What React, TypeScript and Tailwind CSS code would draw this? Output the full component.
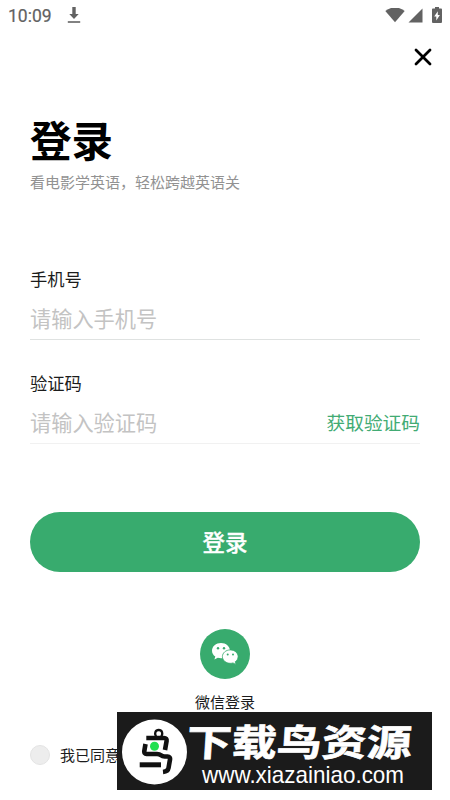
import { X } from "lucide-react";

function StatusBar() {
  return (
    <div className="flex h-8 items-center justify-between pl-2 pr-2 text-[#626262]">
      <div className="flex items-center gap-[15px]">
        <span className="font-[Roboto] text-[17.500px] font-normal leading-8 [-webkit-text-stroke:0.2px_#626262]">10:09</span>
        <svg className="h-[18px] w-3.5" viewBox="0 0 14 18" fill="currentColor">
          <path d="M5.300 0h3.400v7h3L7 12 2.300 7h3z" />
          <path d="M.8 14.200h12.400v1.600H.8z" />
        </svg>
      </div>
      <div className="flex items-center">
        <svg className="h-4 w-5" viewBox="0 0 20 16" fill="currentColor">
          <path d="M0.3 3C6-1.700 14-1.700 19.700 3L10 14.200z" />
        </svg>
        <svg className="ml-[3px] h-4 w-[15px]" viewBox="0 0 15 16" fill="currentColor">
          <path d="M14.5 .5v14H.5z" />
        </svg>
        <svg className="ml-[9px] h-[18px] w-[10px]" viewBox="0 0 10 18" fill="currentColor">
          <path d="M3 0h4v1.600h2.200q.8 0 .8.8V15q0 1-1 1H1q-1 0-1-1V2.400q0-.8.8-.8H3z" />
          <path fill="#fff" d="M5.800 4.200 2.200 9.600h2.100v4l3.600-5.500H5.800z" />
        </svg>
      </div>
    </div>
  );
}

function WechatIcon() {
  return (
    <svg className="h-6 w-7" viewBox="0 0 28 24">
      <path
        fill="#fff"
        d="M10 1C5 1 1 4.400 1 8.700c0 2.400 1.300 4.500 3.300 5.900l-.9 3 3.400-1.800c1 .3 2.100.5 3.200.5 5 0 9-3.400 9-7.600S15 1 10 1z"
      />
      <path
        fill="#fff"
        stroke="#38ab6e"
        strokeWidth=".8"
        d="M19.300 7.900c-4.400 0-7.900 3-7.900 6.700s3.500 6.700 7.900 6.700c1 0 1.900-.1 2.700-.4l3 1.600-.8-2.700c1.800-1.200 2.900-3.100 2.900-5.200 0-3.700-3.400-6.700-7.800-6.700z"
      />
      <g fill="#38ab6e">
        <circle cx="7" cy="6.200" r="1.200" />
        <circle cx="13" cy="6.200" r="1.200" />
        <circle cx="16.700" cy="12.500" r="1" />
        <circle cx="22" cy="12.500" r="1" />
      </g>
    </svg>
  );
}

function BirdLogo() {
  return (
    <svg className="mt-0.5 h-[66px] w-[66px] shrink-0" viewBox="0 0 66 66">
      <circle cx="33.500" cy="33" r="32.500" fill="#fff" />
      <g fill="none" stroke="#111" strokeWidth="4.600">
        <path strokeWidth="2.400" d="M35 17.500c-2-3-.5-6.500 2.700-6.500s4.700 3.500 2.700 6.500" />
        <path d="M25.300 19h17.700q3 0 2.600 3L44 31" />
        <path d="M24.500 25 23.300 32q-.3 3 2.200 3h10.500q2.500 0 4 1.300t4 1.200h2.500q3 .2 2.500 3L47.500 49q-.5 3.500-5.500 4" />
        <path strokeWidth="5" d="M18.700 45.800h21.300" />
      </g>
      <circle cx="33.500" cy="27.300" r="4.500" fill="#21df50" />
    </svg>
  );
}

export default function App() {
  return (
    <div className="relative h-[800px] w-[450px] overflow-hidden bg-white font-['Noto_Sans_CJK_SC',sans-serif] text-[#1c1c1c]">
      <StatusBar />

      <div className="flex h-[50px] items-center justify-end pr-[13px]">
        <X size={28} strokeWidth={2.400} className="text-black" />
      </div>

      <main className="px-[30px]">
        <h1 className="mt-[27px] h-[60px] text-[41.500px] font-bold leading-[60px] text-black">登录</h1>
        <p className="mt-0.5 h-[22px] text-[15px] leading-[22px] text-[#929292]">看电影学英语，轻松跨越英语关</p>

        <section className="mt-[72px] flex h-[75px] flex-col border-b border-[#dfe2e1]">
          <label className="text-[17.300px] leading-7">手机号</label>
          <span className="mt-[9px] text-[21.200px] leading-8 text-[#c3c3c3]">请输入手机号</span>
        </section>

        <section className="mt-[29px] flex h-[75px] flex-col border-b border-[#f1f1f1]">
          <label className="text-[17.300px] leading-7">验证码</label>
          <div className="mt-[9px] flex items-center justify-between">
            <span className="text-[21.200px] leading-8 text-[#c3c3c3]">请输入验证码</span>
            <button className="text-[18.700px] leading-8 text-[#42ab74]">获取验证码</button>
          </div>
        </section>

        <button className="mt-[68px] flex h-[60px] w-full items-center justify-center rounded-full bg-[#38ab6e] text-[22.500px] font-medium text-white [-webkit-text-stroke:0.3px_white]">
          登录
        </button>

        <div className="mt-[57px] flex flex-col items-center">
          <div className="flex h-[50px] w-[50px] items-center justify-center rounded-full bg-[#38ab6e]">
            <WechatIcon />
          </div>
          <span className="mt-3 text-[15px] leading-[22px]">微信登录</span>
        </div>

        <div className="mt-[31px] flex items-center gap-2.5">
          <span className="h-5 w-5 rounded-full border border-[#e4e4e4] bg-[#ededed]" />
          <span className="text-[15px] leading-[22px]">我已同意</span>
        </div>
      </main>

      {/* Site banner over the agreement row */}
      <div className="absolute left-[117px] top-[712px] flex h-[78px] w-[315px] items-center bg-[#1b1b1b] pl-1 text-white">
        <BirdLogo />
        <div className="mt-[5px] flex flex-col">
          <span className="h-[43px] origin-left -skew-x-3 scale-y-[0.82] whitespace-nowrap text-[45px] font-bold leading-[43px] [-webkit-text-stroke:0.8px_white]">
            下载鸟资源
          </span>
          <span className="ml-[15px] origin-left scale-x-[0.935] whitespace-nowrap font-['Liberation_Sans'] text-[24px] leading-[26px]">
            www.xiazainiao.com
          </span>
        </div>
      </div>
    </div>
  );
}
